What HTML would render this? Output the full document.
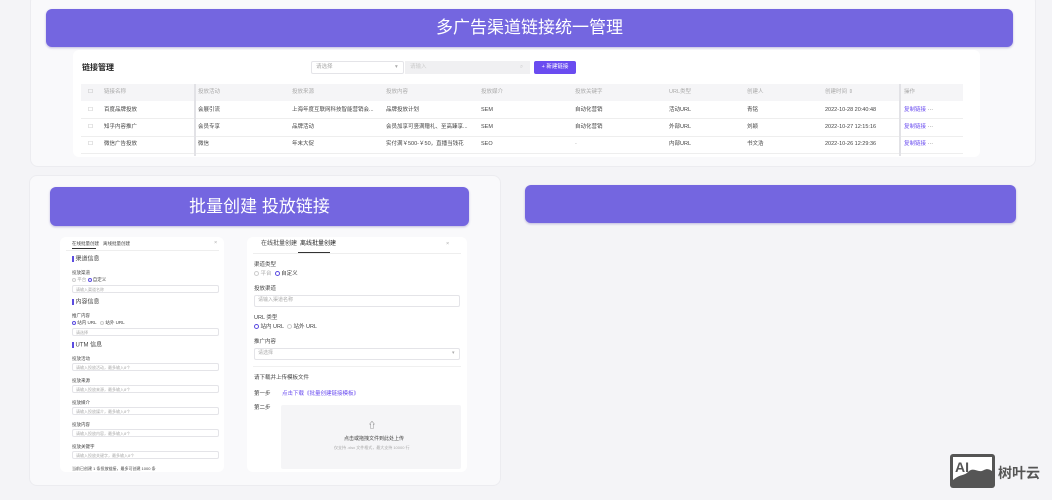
<!DOCTYPE html>
<html><head><meta charset="utf-8"><style>
*{margin:0;padding:0;box-sizing:border-box}
body{width:1052px;height:500px;background:#f4f4f7;font-family:"Liberation Sans","Noto Sans CJK SC",sans-serif;position:relative;overflow:hidden;color:#333}
.a{position:absolute}
.panel{background:#f9f9fb;border:1px solid #ececf0;border-radius:8px}
.banner{background:#7466e0;border-radius:6px;color:#fff;text-align:center;box-shadow:0 1px 2px rgba(60,40,160,.3)}
.card{background:#fff;border-radius:6px}
.t{font-size:5.5px;line-height:7px;color:#444;white-space:nowrap}
.g{color:#aaa}
.inp{border:1px solid #e4e4e8;border-radius:2px;background:#fff;height:9px}
.rd{display:inline-block;width:5px;height:5px;border-radius:50%;border:1.5px solid #5b4ce0;vertical-align:middle}
.ro{display:inline-block;width:5px;height:5px;border-radius:50%;border:1px solid #ccc;vertical-align:middle}
.bar{display:inline-block;width:1.5px;height:6px;background:#5b4ce0;margin-right:2px;vertical-align:middle}
</style></head><body>

<div class="a panel" style="left:30px;top:-6px;width:1006px;height:173px"></div>
<div class="a banner" style="left:46px;top:9px;width:967px;height:38px;font-size:17px;line-height:38px">多广告渠道链接统一管理</div>
<div class="a card" style="left:73px;top:50px;width:907px;height:107px"></div>
<div class="a" style="left:82px;top:62px;font-size:8px;font-weight:bold;color:#222">链接管理</div>
<div class="a inp" style="left:311px;top:61px;width:93px;height:13px"></div>
<div class="a t g" style="left:316px;top:64px">请选择</div>
<div class="a t g" style="left:395px;top:64px">▾</div>
<div class="a" style="left:405px;top:61px;width:125px;height:13px;background:#f0f0f2"></div>
<div class="a t" style="left:410px;top:64px;color:#ccc">请输入</div>
<div class="a t" style="left:520px;top:64px;color:#ccc">⌕</div>
<div class="a" style="left:534px;top:61px;width:42px;height:13px;background:#6a4cf0;border-radius:2px;color:#fff;font-size:5.5px;line-height:13px;text-align:center">+ 新建链接</div>

<div class="a" style="left:81px;top:84px;width:882px;height:17px;background:#f5f5f7"></div>
<div class="a" style="left:81px;top:118px;width:882px;height:1px;background:#eee"></div>
<div class="a" style="left:81px;top:136px;width:882px;height:1px;background:#eee"></div>
<div class="a" style="left:81px;top:153px;width:882px;height:1px;background:#eee"></div>
<div class="a" style="left:194px;top:84px;width:1.5px;height:72px;background:#e2e2e6"></div>
<div class="a" style="left:899px;top:84px;width:1.5px;height:72px;background:#e2e2e6"></div>

<div class="a t g" style="left:88px;top:89px">☐</div><div class="a t g" style="left:104px;top:89px">链接名称</div><div class="a t g" style="left:198px;top:89px">投放活动</div><div class="a t g" style="left:292px;top:89px">投放来源</div><div class="a t g" style="left:386px;top:89px">投放内容</div><div class="a t g" style="left:481px;top:89px">投放媒介</div><div class="a t g" style="left:575px;top:89px">投放关键字</div><div class="a t g" style="left:669px;top:89px">URL类型</div><div class="a t g" style="left:747px;top:89px">创建人</div><div class="a t g" style="left:825px;top:89px">创建时间 ⇕</div><div class="a t g" style="left:904px;top:89px">操作</div>

<div class="a t g" style="left:88px;top:107px">☐</div><div class="a t" style="left:104px;top:107px">百度品牌投放</div><div class="a t" style="left:198px;top:107px">会展引流</div><div class="a t" style="left:292px;top:107px">上海年度互联网科技智能营销会...</div><div class="a t" style="left:386px;top:107px">品牌投放计划</div><div class="a t" style="left:481px;top:107px">SEM</div><div class="a t" style="left:575px;top:107px">自动化营销</div><div class="a t" style="left:669px;top:107px">活动URL</div><div class="a t" style="left:747px;top:107px">青铭</div><div class="a t" style="left:825px;top:107px">2022-10-28 20:40:48</div><div class="a t" style="left:904px;top:107px;color:#6a4cf0">复制链接 <span style="color:#666">···</span></div>

<div class="a t g" style="left:88px;top:124px">☐</div><div class="a t" style="left:104px;top:124px">知乎内容推广</div><div class="a t" style="left:198px;top:124px">会员专享</div><div class="a t" style="left:292px;top:124px">品牌活动</div><div class="a t" style="left:386px;top:124px">会员加享可竖满赠礼、至高臻享...</div><div class="a t" style="left:481px;top:124px">SEM</div><div class="a t" style="left:575px;top:124px">自动化营销</div><div class="a t" style="left:669px;top:124px">外部URL</div><div class="a t" style="left:747px;top:124px">刘颖</div><div class="a t" style="left:825px;top:124px">2022-10-27 12:15:16</div><div class="a t" style="left:904px;top:124px;color:#6a4cf0">复制链接 <span style="color:#666">···</span></div>

<div class="a t g" style="left:88px;top:141px">☐</div><div class="a t" style="left:104px;top:141px">微信广告投放</div><div class="a t" style="left:198px;top:141px">微信</div><div class="a t" style="left:292px;top:141px">年末大促</div><div class="a t" style="left:386px;top:141px">实付满￥500-￥50，直播当钱花</div><div class="a t" style="left:481px;top:141px">SEO</div><div class="a t g" style="left:575px;top:141px">-</div><div class="a t" style="left:669px;top:141px">内部URL</div><div class="a t" style="left:747px;top:141px">书文浩</div><div class="a t" style="left:825px;top:141px">2022-10-26 12:29:36</div><div class="a t" style="left:904px;top:141px;color:#6a4cf0">复制链接 <span style="color:#666">···</span></div>

<div class="a panel" style="left:29px;top:175px;width:472px;height:311px"></div>
<div class="a banner" style="left:50px;top:187px;width:419px;height:39px;font-size:17px;line-height:39px">批量创建 投放链接</div>
<div class="a banner" style="left:525px;top:185px;width:491px;height:38px"></div>

<!-- left form -->
<div class="a card" style="left:60px;top:237px;width:164px;height:235px"></div>
<div class="a t" style="left:72px;top:240px;font-size:4.5px">在线批量创建</div>
<div class="a" style="left:72px;top:248px;width:24px;height:1px;background:#333"></div>
<div class="a t" style="left:103px;top:240px;font-size:4.5px">离线批量创建</div>
<div class="a t g" style="left:214px;top:240px">×</div>
<div class="a" style="left:66px;top:250px;width:153px;height:1px;background:#eee"></div>
<div class="a t" style="left:72px;top:256px;font-size:6px"><span class="bar"></span>渠道信息</div>
<div class="a t" style="left:72px;top:269px;font-size:4.5px">投放渠道</div>
<div class="a t g" style="left:72px;top:276px;font-size:4.5px"><span class="ro" style="width:4px;height:4px"></span> 平台 <span class="rd" style="width:4px;height:4px"></span> <span style="color:#444">自定义</span></div>
<div class="a inp" style="left:72px;top:285px;width:147px;height:8px"></div>
<div class="a t g" style="left:76px;top:286px;font-size:4px">请输入渠道名称</div>
<div class="a t" style="left:72px;top:299px;font-size:6px"><span class="bar"></span>内容信息</div>
<div class="a t" style="left:72px;top:312px;font-size:4.5px">推广内容</div>
<div class="a t" style="left:72px;top:319px;font-size:4.5px"><span class="rd" style="width:4px;height:4px"></span> 站内 URL &nbsp; <span class="ro" style="width:4px;height:4px"></span> 站外 URL</div>
<div class="a inp" style="left:72px;top:328px;width:147px;height:8px"></div>
<div class="a t g" style="left:76px;top:329px;font-size:4px">请选择</div>
<div class="a t" style="left:72px;top:342px;font-size:6px"><span class="bar"></span>UTM 信息</div>
<div class="a t" style="left:72px;top:355px;font-size:4.5px">投放活动</div>
<div class="a inp" style="left:72px;top:363px;width:147px;height:8px"></div><div class="a t g" style="left:76px;top:364px;font-size:4px">请输入投放活动，最多输入8个</div>
<div class="a t" style="left:72px;top:377px;font-size:4.5px">投放来源</div>
<div class="a inp" style="left:72px;top:385px;width:147px;height:8px"></div><div class="a t g" style="left:76px;top:386px;font-size:4px">请输入投放来源，最多输入8个</div>
<div class="a t" style="left:72px;top:399px;font-size:4.5px">投放媒介</div>
<div class="a inp" style="left:72px;top:407px;width:147px;height:8px"></div><div class="a t g" style="left:76px;top:408px;font-size:4px">请输入投放媒介，最多输入8个</div>
<div class="a t" style="left:72px;top:421px;font-size:4.5px">投放内容</div>
<div class="a inp" style="left:72px;top:429px;width:147px;height:8px"></div><div class="a t g" style="left:76px;top:430px;font-size:4px">请输入投放内容，最多输入8个</div>
<div class="a t" style="left:72px;top:443px;font-size:4.5px">投放关键字</div>
<div class="a inp" style="left:72px;top:451px;width:147px;height:8px"></div><div class="a t g" style="left:76px;top:452px;font-size:4px">请输入投放关键字，最多输入8个</div>
<div class="a t" style="left:72px;top:465px;font-size:4px">当前已创建 1 条投放链接，最多可创建 1000 条</div>

<!-- right form -->
<div class="a card" style="left:247px;top:237px;width:220px;height:235px"></div>
<div class="a t" style="left:261px;top:241px;font-size:6px">在线批量创建</div>
<div class="a t" style="left:300px;top:241px;font-size:6px;color:#222">离线批量创建</div>
<div class="a" style="left:298px;top:252px;width:32px;height:1px;background:#333"></div>
<div class="a t g" style="left:446px;top:241px">×</div>
<div class="a" style="left:253px;top:253px;width:208px;height:1px;background:#eee"></div>
<div class="a t" style="left:254px;top:262px">渠道类型</div>
<div class="a t g" style="left:254px;top:271px"><span class="ro"></span> 平台 &nbsp;<span class="rd"></span> <span style="color:#444">自定义</span></div>
<div class="a t" style="left:254px;top:286px">投放渠道</div>
<div class="a inp" style="left:254px;top:295px;width:206px;height:12px"></div>
<div class="a t g" style="left:258px;top:297px;font-size:5px">请输入渠道名称</div>
<div class="a t" style="left:254px;top:315px">URL 类型</div>
<div class="a t" style="left:254px;top:324px"><span class="rd"></span> 站内 URL &nbsp;<span class="ro"></span> 站外 URL</div>
<div class="a t" style="left:254px;top:339px">推广内容</div>
<div class="a inp" style="left:254px;top:348px;width:206px;height:12px"></div>
<div class="a t g" style="left:258px;top:350px;font-size:5px">请选择</div>
<div class="a t g" style="left:452px;top:350px;font-size:5px">▾</div>
<div class="a" style="left:253px;top:366px;width:208px;height:1px;background:#f0f0f0"></div>
<div class="a t" style="left:254px;top:375px">请下载并上传模板文件</div>
<div class="a t" style="left:254px;top:391px">第一步</div>
<div class="a t" style="left:282px;top:391px;color:#6a4cf0">点击下载《批量创建链接模板》</div>
<div class="a t" style="left:254px;top:405px">第二步</div>
<div class="a" style="left:281px;top:405px;width:180px;height:64px;background:#f5f5f7;border-radius:2px"></div>
<div class="a t" style="left:368px;top:421px;font-size:8px;line-height:9px;color:#555">⇧</div>
<div class="a t" style="left:344px;top:436px;font-size:5px">点击或拖拽文件到此处上传</div>
<div class="a t g" style="left:334px;top:444px;font-size:4px">仅支持 .xlsx 文件格式，最大支持 10000 行</div>

<!-- logo -->
<div class="a" style="left:950px;top:454px;width:45px;height:34px;background:#555;border-radius:3px"></div>
<svg class="a" style="left:950px;top:454px" width="45" height="34" viewBox="0 0 45 34"><rect x="3" y="3" width="39" height="28" fill="#fff"/><path d="M3 26 C10 20 14 22 18 18 C24 12 28 20 34 16 C38 14 40 16 42 17 L42 31 L3 31Z" fill="#555"/><text x="5" y="18" font-family="Liberation Sans" font-weight="bold" font-size="14" fill="#555">AI</text></svg>
<div class="a" style="left:998px;top:463px;font-size:14px;font-weight:bold;color:#555">树叶云</div>
</body></html>
